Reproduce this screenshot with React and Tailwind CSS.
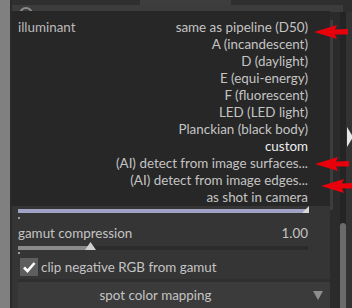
const items = [
  "same as pipeline (D50)",
  "A (incandescent)",
  "D (daylight)",
  "E (equi-energy)",
  "F (fluorescent)",
  "LED (LED light)",
  "Planckian (black body)",
  "custom",
  "(AI) detect from image surfaces...",
  "(AI) detect from image edges...",
  "as shot in camera",
];

function RedArrow({ className }) {
  return (
    <svg className={className} width="34" height="14" viewBox="0 0 34 14">
      <polygon points="0,7 23,0 21,4.5 34,4 34,9.5 21,9.5 23,14" fill="#e8000b" />
    </svg>
  );
}

export default function App() {
  return (
    <div className="relative flex w-[352px] h-[308px] overflow-hidden bg-[#2e2e2e] font-['Lato',sans-serif] text-[13.4px] leading-[17px]">
      <div className="w-[10px] shrink-0 bg-[#808080]" />
      <div className="w-[2px] shrink-0 bg-[#2a2a2a]" />

      {/* module column */}
      <div className="flex w-[318px] shrink-0 flex-col bg-[#333333]">
        <div className="flex h-[5px] bg-[#2f2f2f]">
          <div className="ml-[128px] w-[91px] bg-[#3e3e3e]" />
        </div>
        <div className="relative h-[7px] bg-[#3c3c3c]">
          <div className="absolute left-[7px] top-[2px] h-[14px] w-[14px] rounded-full border-2 border-[#8a8a8a]" />
        </div>

        {/* popup */}
        <div className="relative z-10 h-[198px] bg-[#272727] pt-[8px] pl-[6px] pr-[22px]">
          <div className="flex">
            <div className="text-[#bcbcbc]">illuminant</div>
            <div className="flex flex-1 flex-col items-end">
              {items.map((it) => (
                <div
                  key={it}
                  className={it === "custom" ? "text-[#eeeeee]" : "text-[#c4c4c4]"}
                >
                  {it}
                </div>
              ))}
            </div>
          </div>
        </div>

        <div className="relative flex-1 bg-[#353535] pl-[6px] pr-[10px]">
          <div className="relative mt-[3px] h-[4px] w-[290px] bg-[#a2a2c6]">
            <svg className="absolute right-[-1px] top-[-3px]" width="7" height="7" viewBox="0 0 7 7">
              <polygon points="7,0 7,7 0,7" fill="#d8d8d8" />
            </svg>
          </div>
          <div className="mt-[4px] h-[2px] w-[2px] bg-[#9a9a9a]" />
          <div className="mt-[6px] flex w-[290px] justify-between text-[#c4c4c4]">
            <span>gamut compression</span>
            <span>1.00</span>
          </div>
          <div className="relative mt-[4px] flex h-[4px] w-[290px]">
            <div className="w-[73px] bg-[#8a8a8a]" />
            <div className="flex-1 bg-[#2b2b2b]" />
            <svg className="absolute left-[67px] top-[-4px]" width="11" height="8" viewBox="0 0 11 8">
              <polygon points="5.5,0 11,8 0,8" fill="#cfcfcf" />
            </svg>
          </div>
          <div className="mt-[2px] h-[2px] w-[2px] bg-[#9a9a9a]" />
          <div className="mt-[4px] flex items-center gap-[3px] pl-[2px] text-[#c4c4c4]">
            <div className="flex h-[18px] w-[18px] items-center justify-center bg-[#5e5e5e]">
              <svg width="14" height="12" viewBox="0 0 14 12">
                <path d="M2 6.5 L5.5 10 L12.5 2" stroke="#ffffff" strokeWidth="2.6" fill="none" />
              </svg>
            </div>
            <span>clip negative RGB from gamut</span>
          </div>
          <div className="mt-[3px] h-[3px] bg-[#2f2f2f] -mr-[10px]" />
          <div className="-mr-[10px] flex h-[26px] items-center bg-[#3b3b3b] text-[#c4c4c4]">
            <span className="flex-1 text-center pr-[20px]">spot color mapping</span>
            <svg className="mr-[7px]" width="10" height="9" viewBox="0 0 10 9">
              <polygon points="0,0 10,0 5,9" fill="#8e8e8e" />
            </svg>
          </div>
        </div>
      </div>

      {/* right side */}
      <div className="flex flex-1 flex-col">
        <div className="h-[5px] bg-[#2e2e2e]" />
        <div className="h-[7px] w-[13px] bg-[#3c3c3c]" />
        <div className="flex flex-1">
          <div className="flex w-[10px] flex-col bg-[#2b2b2b]">
            <div className="mt-[8px] h-[190px] w-[3px] bg-[#3d3d3d]" />
          </div>
          <div className="flex w-[6px] flex-col bg-[#242424]">
            <div className="mt-[211px] flex-1 rounded-t-full bg-[#6b6b6b]" />
          </div>
          <div className="relative flex-1 bg-[#333333]">
            <svg className="absolute left-[1px] top-[115px]" width="6" height="20" viewBox="0 0 6 20">
              <polygon points="0,0 6,10 0,20" fill="#e6e6e6" />
            </svg>
          </div>
        </div>
      </div>

      <RedArrow className="absolute z-20 left-[314px] top-[25px]" />
      <RedArrow className="absolute z-20 left-[315px] top-[157px]" />
      <RedArrow className="absolute z-20 left-[321px] top-[179px]" />
    </div>
  );
}
